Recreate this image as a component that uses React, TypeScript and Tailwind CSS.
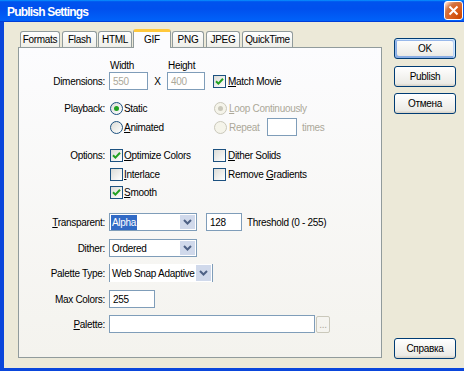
import type { ReactNode } from 'react'

const font = "font-['Liberation_Sans',Arial,sans-serif]"

function Check({ checked }: { checked?: boolean }) {
  return (
    <span className="flex h-[13px] w-[13px] shrink-0 items-center justify-center border border-[#1c5180] bg-[linear-gradient(135deg,#dcdcd7,#ffffff)]">
      {checked && (
        <svg width="9" height="9" viewBox="0 0 9 9">
          <path d="M1 4.2 L3.4 6.6 L8 1.8" fill="none" stroke="#21a121" strokeWidth="2" />
        </svg>
      )}
    </span>
  )
}

function Radio({ checked, disabled }: { checked?: boolean; disabled?: boolean }) {
  return (
    <span
      className={
        'flex h-[13px] w-[13px] shrink-0 items-center justify-center rounded-full border ' +
        (disabled
          ? 'border-[#cac8bb] bg-[#f5f4ea]'
          : 'border-[#1c5180] bg-[linear-gradient(135deg,#dcdcd7,#ffffff)]')
      }
    >
      {checked && (
        <span
          className={
            'h-[5px] w-[5px] rounded-full ' +
            (disabled ? 'bg-[#cac8bb]' : 'bg-[#21a121]')
          }
        />
      )}
    </span>
  )
}

function TextBox({ value, className, disabled }: { value?: string; className: string; disabled?: boolean }) {
  return (
    <span
      className={
        'flex h-[18px] shrink-0 items-center border border-[#7f9db9] bg-white pl-[3px] ' +
        (disabled ? 'text-[#aca899] ' : 'text-black ') +
        className
      }
    >
      {value}
    </span>
  )
}

function Arrow() {
  return (
    <span className="my-px mr-px flex w-[15px] shrink-0 items-center justify-center bg-[#d0d9eb]">
      <svg width="9" height="6" viewBox="0 0 9 6">
        <path d="M1 1 L4.5 4.5 L8 1" fill="none" stroke="#4d6185" strokeWidth="2" />
      </svg>
    </span>
  )
}

function Select({ children, className }: { children: ReactNode; className: string }) {
  return (
    <span className={'flex h-[18px] shrink-0 items-stretch bg-white ' + className}>
      <span className="flex flex-1 items-center overflow-hidden whitespace-nowrap pl-px">{children}</span>
      <Arrow />
    </span>
  )
}

function XPButton({ label, isDefault, className }: { label: string; isDefault?: boolean; className?: string }) {
  return (
    <button
      className={
        'flex h-[21px] w-[62px] items-center justify-center rounded-[3px] border border-[#003c74] bg-[linear-gradient(180deg,#ffffff,#ecebe6_86%,#d6d0c5)] text-black ' +
        (isDefault
          ? 'shadow-[inset_-1px_1px_#cee7ff,inset_1px_2px_#98b8ea,inset_-2px_2px_#bcd4f6,inset_1px_-1px_#89ade4,inset_2px_-2px_#89ade4] '
          : '') +
        (className ?? '')
      }
    >
      {label}
    </button>
  )
}

function Label({ children }: { children: ReactNode }) {
  return <span className="w-[90px] shrink-0 pr-[4px] text-right">{children}</span>
}

const tabs = [
  { name: 'Formats', ml: 'ml-px', w: 'w-[40px]' },
  { name: 'Flash', ml: 'ml-[2px]', w: 'w-[35px]' },
  { name: 'HTML', ml: 'ml-px', w: 'w-[34px]' },
  { name: 'GIF', ml: 'ml-px', w: 'w-[38px]', active: true },
  { name: 'PNG', ml: 'ml-px', w: 'w-[32px]' },
  { name: 'JPEG', ml: 'ml-[2px]', w: 'w-[34px]' },
  { name: 'QuickTime', ml: 'ml-[2px]', w: 'w-[51px]' },
]

export default function App() {
  return (
    <div className={`${font} flex h-[371px] w-[464px] flex-col bg-[#0a46db] text-[10px] tracking-[-0.3px] text-black`}>
      {/* title bar */}
      <div className="flex h-[22px] shrink-0 items-start justify-between bg-[linear-gradient(180deg,#0997ff,#0053ee_8%,#0050ee_40%,#0060f8_88%,#0060f8_93%,#005bff_95%,#003dd7_96%,#003dd7)]">
        <span className="mt-[3px] ml-[7px] text-[12px] font-bold tracking-[-0.8px] text-white">Publish Settings</span>
        <span className="mt-px mr-px flex h-[19px] w-[19px] items-center justify-center rounded-[3px] border border-white bg-[radial-gradient(circle_at_90%_90%,#cc4600_0%,#dc6527_55%,#cd7546_70%,#ffccb2_90%,#ffffff_100%)]">
          <svg width="11" height="11" viewBox="0 0 11 11">
            <path d="M1.5 1.5 L9.5 9.5 M9.5 1.5 L1.5 9.5" stroke="white" strokeWidth="2" />
          </svg>
        </span>
      </div>

      {/* body */}
      <div className="mb-[3px] ml-[4px] flex flex-1 bg-[#ece9d8]">
        <div className="ml-[14px] mt-[7px] flex w-[364px] flex-col pb-[10px]">
          {/* tabs */}
          <div className="flex h-[18px] items-end pl-px">
            {tabs.map((t) =>
              t.active ? (
                <span
                  key={t.name}
                  className={`${t.ml} ${t.w} relative z-10 -mb-px flex h-[19px] items-center justify-center rounded-t-[3px] border-x border-t-[3px] border-x-[#919b9c] border-t-[#ffc83c] bg-[#fcfcfe] pb-[2px]`}
                >
                  {t.name}
                </span>
              ) : (
                <span
                  key={t.name}
                  className={`${t.ml} ${t.w} flex h-[16px] items-center justify-center rounded-t-[3px] border-x border-t border-[#919b9c] bg-[linear-gradient(180deg,#ffffff,#fafaf9_26%,#f0f0ea_95%,#ecebe6)]`}
                >
                  {t.name}
                </span>
              ),
            )}
          </div>

          {/* panel */}
          <div className="flex flex-1 flex-col border border-[#919b9c] bg-[linear-gradient(180deg,#fcfcfe,#f4f3ee)]">
            <div className="mt-[11px] flex h-[13px] items-center">
              <span className="w-[90px] shrink-0" />
              <span className="w-[58px] pl-px">Width</span>
              <span className="pl-px">Height</span>
            </div>

            <div className="flex h-[18px] items-center">
              <Label>Dimensions:</Label>
              <TextBox value="550" className="w-[39px]" disabled />
              <span className="w-[19px] text-center">X</span>
              <TextBox value="400" className="w-[38px]" disabled />
              <span className="ml-[8px]">
                <Check checked />
              </span>
              <span className="ml-[2px]">
                <u>M</u>atch Movie
              </span>
            </div>

            <div className="mt-[9px] flex h-[18px] items-center">
              <Label>Playback:</Label>
              <span className="flex w-[105px] items-center">
                <span className="ml-px">
                  <Radio checked />
                </span>
                <span className="ml-px">Static</span>
              </span>
              <Radio checked disabled />
              <span className="ml-[2px] text-[#aca899]">
                <u>L</u>oop Continuously
              </span>
            </div>

            <div className="mt-px flex h-[18px] items-center">
              <Label>&nbsp;</Label>
              <span className="flex w-[105px] items-center">
                <span className="ml-px">
                  <Radio />
                </span>
                <span className="ml-px">
                  <u>A</u>nimated
                </span>
              </span>
              <Radio disabled />
              <span className="ml-[2px] w-[38px] text-[#aca899]">Repeat</span>
              <TextBox className="h-[17px] w-[30px]" />
              <span className="ml-[5px] text-[#aca899]">times</span>
            </div>

            <div className="mt-[10px] flex h-[18px] items-center">
              <Label>Options:</Label>
              <span className="flex w-[104px] items-center">
                <span className="ml-px">
                  <Check checked />
                </span>
                <span className="ml-px">
                  <u>O</u>ptimize Colors
                </span>
              </span>
              <Check />
              <span className="ml-[2px]">
                <u>D</u>ither Solids
              </span>
            </div>

            <div className="mt-px flex h-[18px] items-center">
              <Label>&nbsp;</Label>
              <span className="flex w-[104px] items-center">
                <span className="ml-px">
                  <Check />
                </span>
                <span className="ml-px">
                  <u>I</u>nterlace
                </span>
              </span>
              <Check />
              <span className="ml-[2px]">
                Remove <u>G</u>radients
              </span>
            </div>

            <div className="flex h-[18px] items-center">
              <Label>&nbsp;</Label>
              <span className="ml-px">
                <Check checked />
              </span>
              <span className="ml-px">
                <u>S</u>mooth
              </span>
            </div>

            <div className="mt-[12px] flex h-[18px] items-center">
              <Label>
                <u>T</u>ransparent:
              </Label>
              <Select className="w-[88px] border border-[#7f9db9]">
                <span className="bg-[#316ac5] px-px text-white">Alpha</span>
              </Select>
              <TextBox value="128" className="ml-[9px] w-[36px]" />
              <span className="ml-[5px]">Threshold (0 - 255)</span>
            </div>

            <div className="mt-[8px] flex h-[18px] items-center">
              <Label>Dither:</Label>
              <Select className="w-[88px] border border-[#7f9db9]">
                <span className="pl-px">Ordered</span>
              </Select>
            </div>

            <div className="mt-[7px] flex h-[18px] items-center">
              <Label>Palette Type:</Label>
              <Select className="w-[104px] border-x border-[#7f9db9]">
                <span className="pl-px">Web Snap Adaptive</span>
              </Select>
            </div>

            <div className="mt-[8px] flex h-[18px] items-center">
              <Label>Max Colors:</Label>
              <TextBox value="255" className="w-[46px]" />
            </div>

            <div className="mt-[7px] flex h-[18px] items-center">
              <Label>
                <u>P</u>alette:
              </Label>
              <TextBox className="w-[206px]" />
              <span className="ml-px flex h-[17px] w-[14px] items-end justify-center rounded-[2px] border border-[#cac8bb] pb-[2px] leading-none text-[#aca899]">
                ...
              </span>
            </div>
          </div>
        </div>

        {/* buttons */}
        <div className="ml-[12px] flex flex-col pt-[16px] pb-[9px]">
          <XPButton label="OK" isDefault />
          <XPButton label="Publish" className="mt-[7px]" />
          <XPButton label="Отмена" className="mt-[6px]" />
          <span className="flex-1" />
          <XPButton label="Справка" />
        </div>
      </div>
    </div>
  )
}
